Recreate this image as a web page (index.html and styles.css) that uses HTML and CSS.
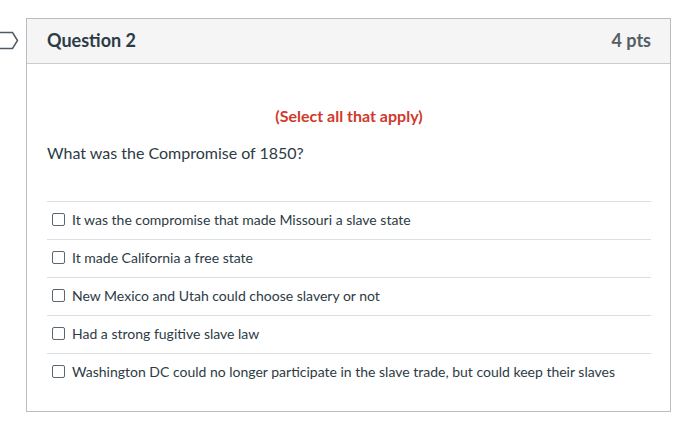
FILE: index.html
```html
<!DOCTYPE html>
<html>
<head>
<meta charset="utf-8">
<link rel="stylesheet" href="styles.css">
</head>
<body>
<div class="page">
  <div class="flag">
    <svg width="19" height="19" viewBox="0 0 19 19"><path d="M-2 1.5 H12.5 L17.5 9.5 L12.5 17.5 H-2 Z" fill="#fff" stroke="#4f5a63" stroke-width="1.5"/></svg>
  </div>
  <div class="card">
    <div class="card-header">
      <span class="title">Question 2</span>
      <span class="pts">4 pts</span>
    </div>
    <div class="card-body">
      <p class="select">(Select all that apply)</p>
      <p class="question">What was the Compromise of 1850?</p>
      <div class="answers">
        <label class="answer"><span class="box"></span>It was the compromise that made Missouri a slave state</label>
        <label class="answer"><span class="box"></span>It made California a free state</label>
        <label class="answer"><span class="box"></span>New Mexico and Utah could choose slavery or not</label>
        <label class="answer"><span class="box"></span>Had a strong fugitive slave law</label>
        <label class="answer"><span class="box"></span>Washington DC could no longer participate in the slave trade, but could keep their slaves</label>
      </div>
    </div>
  </div>
</div>
</body>
</html>
```
FILE: styles.css
```css
* { box-sizing: border-box; }
html, body { margin: 0; padding: 0; background: #fff; }
body { font-family: Lato, "Open Sans", sans-serif; color: #2d3b45; }
.page {
  display: flex;
  align-items: flex-start;
  padding-top: 18px;
}
.flag {
  width: 26px;
  margin-top: 13px;
  display: flex;
}
.card {
  width: 645px;
  height: 394px;
  border: 1px solid #b8bdc1;
}
.card-header {
  height: 45px;
  background: #f5f5f5;
  border-bottom: 1px solid #c7cdd1;
  display: flex;
  align-items: center;
  justify-content: space-between;
  padding: 0 19px 2px 20px;
}
.title { font-size: 18px; font-weight: 700; color: #2d3b45; }
.pts { font-size: 18px; font-weight: 700; color: #555f66; }
.card-body { padding: 40px 19px 20px 20px; }
.select {
  margin: 0;
  text-align: center;
  font-size: 16px;
  font-weight: 700;
  line-height: 24px;
  color: #d0392b;
}
.question {
  margin: 13px 0 0;
  font-size: 16px;
  line-height: 24px;
}
.answers { margin-top: 36px; }
.answer {
  display: flex;
  align-items: center;
  height: 38px;
  border-top: 1px solid #dcdfe1;
  padding-left: 5px;
  padding-bottom: 3px;
  font-size: 14px;
  color: #2d3b45;
}
.box {
  width: 13px;
  height: 13px;
  border: 1px solid #5b6670;
  border-radius: 2px;
  margin-right: 7px;
  flex: none;
}
```
